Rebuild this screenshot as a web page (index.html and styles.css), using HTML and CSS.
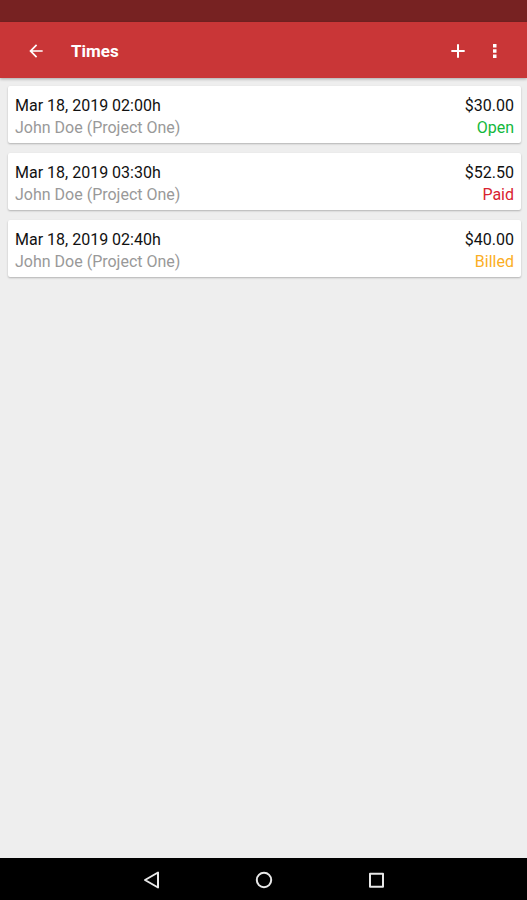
FILE: index.html
```html
<!DOCTYPE html>
<html lang="en">
<head>
<meta charset="utf-8">
<meta name="viewport" content="width=device-width, initial-scale=1">
<title>Times</title>
<link rel="stylesheet" href="styles.css">
</head>
<body>
<div class="status-bar"></div>
<header class="app-bar">
  <button class="icon-button" type="button" aria-label="Back">
    <svg class="icon" viewBox="0 0 24 24"><path d="M20 11H7.83l5.59-5.59L12 4l-8 8 8 8 1.41-1.41L7.83 13H20v-2z"/></svg>
  </button>
  <h1 class="title">Times</h1>
  <button class="icon-button" type="button" aria-label="Add">
    <svg class="icon" viewBox="0 0 24 24"><path d="M20 13.200h-6.800V20h-2.400v-6.800H4v-2.400h6.800V4h2.400v6.800H20z"/></svg>
  </button>
  <button class="icon-button" type="button" aria-label="More options">
    <svg class="icon" viewBox="0 0 24 24"><path d="M9.600 3.600h4.200v4.200H9.600zM9.600 9.900h4.200v4.200H9.600zM9.600 16.200h4.200v4.200H9.600z"/></svg>
  </button>
</header>
<main class="content">
  <ul class="list">
    <li class="card">
      <div class="row"><span>Mar 18, 2019 02:00h</span><span>$30.00</span></div>
      <div class="row detail"><span>John Doe (Project One)</span><span class="open">Open</span></div>
    </li>
    <li class="card">
      <div class="row"><span>Mar 18, 2019 03:30h</span><span>$52.50</span></div>
      <div class="row detail"><span>John Doe (Project One)</span><span class="paid">Paid</span></div>
    </li>
    <li class="card">
      <div class="row"><span>Mar 18, 2019 02:40h</span><span>$40.00</span></div>
      <div class="row detail"><span>John Doe (Project One)</span><span class="billed">Billed</span></div>
    </li>
  </ul>
</main>
<nav class="nav-bar" aria-label="System">
  <button class="nav-button" type="button" aria-label="Back">
    <svg class="nav-icon" viewBox="0 0 20 20"><path d="M16 2.500v15L3 10z"/></svg>
  </button>
  <button class="nav-button" type="button" aria-label="Home">
    <svg class="nav-icon" viewBox="0 0 20 20"><circle cx="10" cy="10" r="7.200"/></svg>
  </button>
  <button class="nav-button" type="button" aria-label="Recent apps">
    <svg class="nav-icon" viewBox="0 0 20 20"><path d="M4 3.700h13v13H4z"/></svg>
  </button>
</nav>
</body>
</html>
```
FILE: styles.css
```css
* {
  box-sizing: border-box;
}

body {
  margin: 0;
  min-height: 100vh;
  display: flex;
  flex-direction: column;
  background: #eeeeee;
  color: #111;
  font: 16px/22px Roboto, sans-serif;
}

button {
  padding: 0;
  border: 0;
  background: none;
  display: flex;
  align-items: center;
  justify-content: center;
}

.status-bar {
  height: 22px;
  background: #772222;
}

.app-bar {
  height: 56px;
  padding: 2px 14px 0 17px;
  display: flex;
  align-items: center;
  background: #c93637;
  color: #fff;
  box-shadow: 0 1px 3px rgba(0, 0, 0, 0.3);
}

.icon-button {
  width: 37px;
  height: 48px;
}

.icon {
  width: 20px;
  height: 20px;
  fill: #fff;
}

.title {
  flex: 1;
  margin: 0;
  padding-left: 17px;
  font-size: 17px;
  line-height: 24px;
  font-weight: 700;
}

.content {
  flex: 1;
  padding: 8px 6px 8px 8px;
}

.list {
  margin: 0;
  padding: 0;
  display: grid;
  gap: 10px;
  list-style: none;
}

.card {
  padding: 9px 7px 4px;
  border-radius: 2px;
  background: #fff;
  box-shadow: 0 1px 2px rgba(0, 0, 0, 0.25);
}

.row {
  display: flex;
  justify-content: space-between;
}

.detail {
  color: #999;
}

.open {
  color: #14b83c;
}

.paid {
  color: #d92330;
}

.billed {
  color: #fbae24;
}

.nav-bar {
  height: 42px;
  padding: 1px 95px 0;
  display: flex;
  justify-content: center;
  background: #000;
}

.nav-button {
  flex: 0 1 112px;
}

.nav-icon {
  width: 20px;
  height: 20px;
  fill: none;
  stroke: #e8e8e8;
  stroke-width: 2px;
  stroke-linejoin: round;
}
```
